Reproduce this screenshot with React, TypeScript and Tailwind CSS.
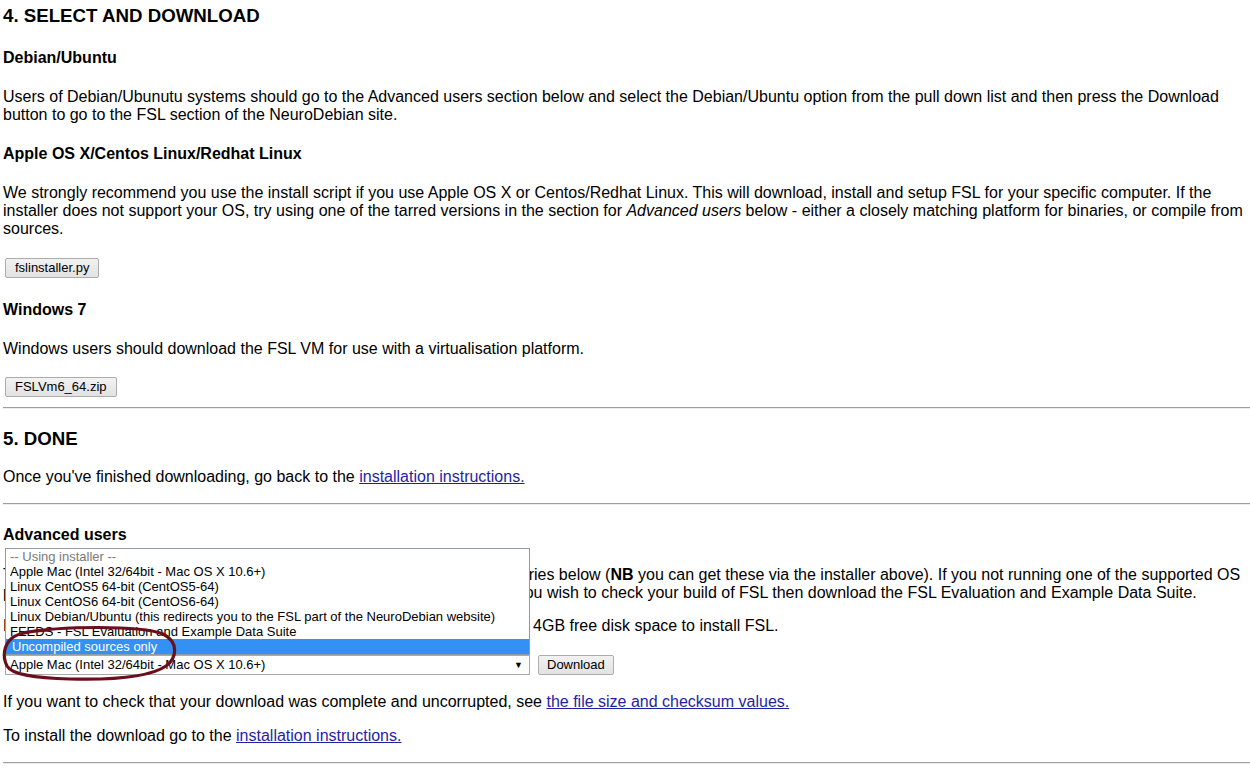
import React from "react";

const options = [
  "Apple Mac (Intel 32/64bit - Mac OS X 10.6+)",
  "Linux CentOS5 64-bit (CentOS5-64)",
  "Linux CentOS6 64-bit (CentOS6-64)",
  "Linux Debian/Ubuntu (this redirects you to the FSL part of the NeuroDebian website)",
  "FEEDS - FSL Evaluation and Example Data Suite",
];

function Btn({ children, className = "px-[9px]" }: { children: React.ReactNode; className?: string }) {
  return (
    <button
      className={
        "h-[20px] text-[13px] leading-[18px] text-black border border-[#acacac] rounded-[2px] bg-gradient-to-b from-[#f2f2f2] to-[#e2e2e2] " +
        className
      }
    >
      {children}
    </button>
  );
}

function Rule({ className = "" }: { className?: string }) {
  return <div className={"h-[2px] border-t border-t-[#9e9e9e] border-b border-b-[#ededed] " + className} />;
}

function A({ children }: { children: React.ReactNode }) {
  return <a className="text-[#1f1fa3] underline cursor-pointer">{children}</a>;
}

export default function App() {
  return (
    <div className="min-h-screen bg-white text-black pl-[3px] font-['Liberation_Sans',Arial,sans-serif] text-[16px] leading-[18px]">
      {/* Section 4 */}
      <h2 className="pt-[5px] text-[18.7px] leading-[22px] font-bold">4. SELECT AND DOWNLOAD</h2>

      <h3 className="mt-[22px] font-bold">Debian/Ubuntu</h3>
      <p className="mt-[21px]">
        Users of Debian/Ubunutu systems should go to the Advanced users section below and select the Debian/Ubuntu option from the pull down list and then press the Download button to go to the FSL section of the NeuroDebian site.
      </p>

      <h3 className="mt-[21px] font-bold">Apple OS X/Centos Linux/Redhat Linux</h3>
      <p className="mt-[21px]">
        We strongly recommend you use the install script if you use Apple OS X or Centos/Redhat Linux. This will download, install and setup FSL for your specific computer. If the installer does not support your OS, try using one of the tarred versions in the section for <i>Advanced users</i> below - either a closely matching platform for binaries, or compile from sources.
      </p>
      <div className="mt-[20px] pl-[2px]">
        <Btn>fslinstaller.py</Btn>
      </div>

      <h3 className="mt-[23px] font-bold">Windows 7</h3>
      <p className="mt-[21px]">Windows users should download the FSL VM for use with a virtualisation platform.</p>
      <div className="mt-[19px] pl-[2px]">
        <Btn>FSLVm6_64.zip</Btn>
      </div>

      <Rule className="mt-[10px]" />

      {/* Section 5 */}
      <h2 className="mt-[19px] text-[18.7px] leading-[22px] font-bold">5. DONE</h2>
      <p className="mt-[18px]">
        Once you've finished downloading, go back to the <A>installation instructions.</A>
      </p>

      <Rule className="mt-[17px]" />

      <h3 className="mt-[21px] font-bold">Advanced users</h3>
      <p className="mt-[22px]">
        This section is for advanced users who wish to download and use the binaries below (<b>NB</b> you can get these via the installer above). If you not running one of the supported OS
        <br />
        platforms, you may compile the sources yourself instead. Alternatively, if you wish to check your build of FSL then download the FSL Evaluation and Example Data Suite.
      </p>
      <p className="mt-[15px]">
        Please note that the full installation is large, and you will now need at least 4GB free disk space to install FSL.
      </p>

      <div className="mt-[20px] pl-[2px] flex items-center gap-[8px]">
        <div className="relative">
          {/* open dropdown list */}
          <div className="absolute left-0 bottom-full w-[525px] bg-white border border-[#8f9aa8] text-[13px] leading-[15px] z-10">
            <div className="pl-[4px] text-[#7a7a7a]">-- Using installer --</div>
            {options.map((o) => (
              <div key={o} className="pl-[4px] whitespace-nowrap">
                {o}
              </div>
            ))}
            <div className="pl-[6px] bg-[#3391f6] text-white">Uncompiled sources only</div>
          </div>
          {/* select box */}
          <div className="w-[525px] h-[20px] border border-[#a9a9a9] bg-white flex items-center justify-between pl-[4px] pr-[6px] text-[13px]">
            <span>Apple Mac (Intel 32/64bit - Mac OS X 10.6+)</span>
            <span className="text-[9px]">▼</span>
          </div>
          {/* annotation loop */}
          <svg className="absolute left-[-5px] top-[-30px] z-20 pointer-events-none" width="190" height="62" viewBox="0 0 190 62">
            <path
              d="M 22 8 C 60 1, 140 0, 163 9 C 179 17, 177 33, 166 41 C 150 52, 110 55, 70 54 C 35 53, 12 50, 7 41 C 2 31, 4 20, 12 13 C 18 8, 30 6, 50 5"
              fill="none"
              stroke="#6a0f1d"
              strokeWidth="3.2"
              strokeLinecap="round"
            />
          </svg>
        </div>
        <Btn className="px-[8px]">Download</Btn>
      </div>

      <p className="mt-[18px]">
        If you want to check that your download was complete and uncorrupted, see <A>the file size and checksum values.</A>
      </p>
      <p className="mt-[16px]">
        To install the download go to the <A>installation instructions.</A>
      </p>
      <Rule className="mt-[17px]" />
    </div>
  );
}
